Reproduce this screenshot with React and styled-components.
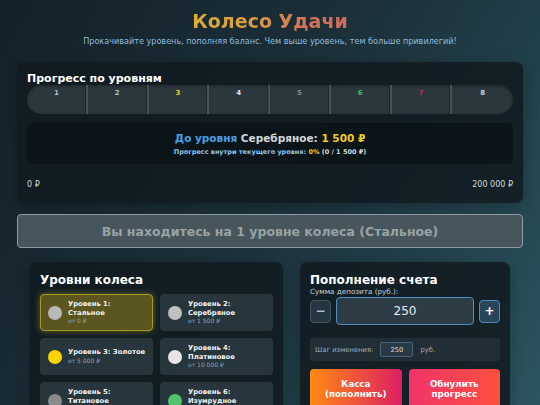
import React, { useState } from 'react';
import styled, { createGlobalStyle, css } from 'styled-components';

const GlobalStyle = createGlobalStyle`
    html, body {
        margin: 0;
        padding: 0;
        height: 100%;
    }
    body {
        font-family: "DejaVu Sans", "Noto Sans", sans-serif;
        background: linear-gradient(120deg, #13212a 0%, #1b2f38 45%, #22414b 75%, #2c5560 100%);
        color: #fff;
        overflow: hidden;
    }
`;

const Page = styled.div`
    width: 540px;
    height: 405px;
    padding-top: 10px;
    box-sizing: border-box;
    overflow: hidden;
`;

const Header = styled.div`
    display: flex;
    flex-direction: column;
    align-items: center;
    gap: 3px;
    margin-bottom: 16px;
`;

const Title = styled.h1`
    display: inline-block;
    margin: 0;
    font-size: 19px;
    line-height: 23px;
    font-weight: bold;
    background: linear-gradient(90deg, #dcaa3a 0%, #d99c42 40%, #d4765a 70%, #cf6a5e 100%);
    -webkit-background-clip: text;
    background-clip: text;
    color: transparent;
`;

const Subtitle = styled.p`
    margin: 0;
    font-size: 8.1px;
    color: #8fbcdc;
`;

const Card = styled.section`
    background: rgba(16, 26, 32, 0.85);
    border-radius: 7px;
    padding: ${p => p.$pad || '11px 10px'};
    box-shadow: 0 4px 14px rgba(0, 0, 0, 0.25);
    min-width: 0;
`;

const ProgressCard = styled(Card)`
    margin: 0 17px;
`;

const CardTitle = styled.h2`
    margin: 0;
    font-size: ${p => p.$size || '11px'};
    line-height: ${p => p.$lh || '13px'};
    font-weight: bold;
    color: #fff;
`;

const LevelBar = styled.div`
    display: grid;
    grid-template-columns: repeat(8, 1fr);
    height: 29px;
    border-radius: 15px;
    overflow: hidden;
    background: #2a373d;
    box-shadow: inset 0 1px 3px rgba(0, 0, 0, 0.35);
`;

const Segment = styled.div`
    display: flex;
    justify-content: center;
    padding-top: 4px;
    font-size: 7px;
    font-weight: bold;
    color: ${p => p.$color};
    border-right: 2px solid #485155;
    box-shadow: inset -1px 0 0 #1d262a;
    &:last-child {
        border-right: none;
        box-shadow: none;
    }
`;

const NextBox = styled.div`
    margin-top: 9px;
    background: #0b1519;
    border-radius: 5px;
    height: 41px;
    display: flex;
    flex-direction: column;
    align-items: center;
    justify-content: center;
    gap: 4px;
`;

const NextLine = styled.div`
    font-size: 10.5px;
    font-weight: bold;
    color: #d3d6d8;
`;

const SubLine = styled.div`
    font-size: 6.5px;
    font-weight: bold;
    color: #d0d8de;
`;

const Tone = styled.span`
    color: ${p => p.$c};
`;

const Scale = styled.div`
    display: flex;
    justify-content: space-between;
    font-size: 8px;
    line-height: 10px;
    color: #d5dadc;
    margin-top: 16px;
`;

const StatusButton = styled.button`
    display: block;
    width: calc(100% - 34px);
    margin: 11px 17px 0;
    height: 34px;
    border-radius: 4px;
    border: 1px solid #8d9b9f;
    background: #46565c;
    color: #98a3a6;
    font-family: inherit;
    font-size: 12.5px;
    font-weight: bold;
`;

const Bottom = styled.div`
    display: grid;
    grid-template-columns: 253px minmax(0, 1fr);
    gap: 17px;
    margin: 14px 30px 0;
`;

const LevelsGrid = styled.div`
    display: grid;
    grid-template-columns: minmax(0, 1fr) minmax(0, 1fr);
    gap: 7px;
    margin-top: 7px;
`;

const LevelCell = styled.div`
    height: 37px;
    box-sizing: border-box;
    border-radius: 4px;
    display: flex;
    align-items: center;
    gap: 6px;
    padding: 0 4px 0 7px;
    background: #27353c;
    border: 1px solid transparent;
    overflow: hidden;
    ${p => p.$active && css`
        background: #5b561f;
        border-color: #a49c22;
        box-shadow: 0 0 6px rgba(220, 200, 40, 0.45);
    `}
`;

const Dot = styled.span`
    flex: none;
    width: 14px;
    height: 14px;
    border-radius: 50%;
    background: ${p => p.$c};
`;

const LevelText = styled.div`
    display: flex;
    flex-direction: column;
    min-width: 0;
`;

const LevelName = styled.div`
    font-size: 6.8px;
    line-height: 8.5px;
    font-weight: bold;
    color: #f1f3f4;
    white-space: nowrap;
`;

const LevelPrice = styled.div`
    font-size: 6px;
    line-height: 8px;
    color: #8fa4b2;
`;

const FieldLabel = styled.div`
    font-size: 7.2px;
    line-height: 9px;
    color: #c8d2d8;
`;

const AmountRow = styled.div`
    display: flex;
    align-items: center;
    gap: 5px;
    margin-top: 1px;
`;

const StepButton = styled.button`
    flex: none;
    width: 21px;
    height: 23px;
    padding: 0;
    border-radius: 4px;
    font-family: inherit;
    font-size: 12px;
    font-weight: bold;
    color: ${p => p.$primary ? '#fff' : '#b4c0c8'};
    background: ${p => p.$primary ? '#294559' : '#263640'};
    border: 1px solid ${p => p.$primary ? '#4f8bb8' : '#445864'};
`;

const AmountInput = styled.input`
    flex: 1;
    width: 0;
    min-width: 0;
    height: 28px;
    box-sizing: border-box;
    border-radius: 4px;
    border: 1px solid #4b8ec0;
    background: #2d3c45;
    color: #e8ecee;
    text-align: center;
    font-family: inherit;
    font-size: 12px;
`;

const StepRow = styled.div`
    display: flex;
    align-items: center;
    gap: 7px;
    margin-top: 13px;
    height: 23px;
    padding: 0 5px;
    border-radius: 3px;
    background: #222e35;
    font-size: 6.8px;
    color: #9fb0ba;
`;

const SmallInput = styled.input`
    width: 33px;
    height: 15px;
    box-sizing: border-box;
    border-radius: 2px;
    border: 1px solid #45637a;
    background: #2a3a45;
    color: #d4dde2;
    text-align: center;
    font-family: inherit;
    font-size: 6.8px;
    padding: 0;
`;

const Actions = styled.div`
    display: grid;
    grid-template-columns: 1fr 1fr;
    gap: 7px;
    margin-top: 8px;
`;

const ActionButton = styled.button`
    height: 40px;
    border: none;
    border-radius: 4px;
    color: #fff;
    font-family: inherit;
    font-size: 8.8px;
    font-weight: bold;
    line-height: 10px;
    background: ${p => p.$bg};
`;

const levels = [
    { n: 1, c: '#b9bcbe' },
    { n: 2, c: '#b9bcbe' },
    { n: 3, c: '#f2cd1c' },
    { n: 4, c: '#e2e5e7' },
    { n: 5, c: '#808a8d' },
    { n: 6, c: '#44b865' },
    { n: 7, c: '#d0205a' },
    { n: 8, c: '#b8d8ee' },
];

const wheel = [
    { name: ['Уровень 1:', 'Стальное'], price: 'от 0 ₽', c: '#b8b8b8', active: true },
    { name: ['Уровень 2:', 'Серебряное'], price: 'от 1 500 ₽', c: '#c0c0c0' },
    { name: ['Уровень 3: Золотое'], price: 'от 5 000 ₽', c: '#ffd400' },
    { name: ['Уровень 4:', 'Платиновое'], price: 'от 10 000 ₽', c: '#e6e6e6' },
    { name: ['Уровень 5:', 'Титановое'], price: 'от 20 000 ₽', c: '#8a8a8a' },
    { name: ['Уровень 6:', 'Изумрудное'], price: 'от 50 000 ₽', c: '#4ec46c' },
];

export default function App() {
    const [amount, setAmount] = useState(250);
    const [step, setStep] = useState(250);

    return (
        <Page>
            <GlobalStyle />
            <Header>
                <Title>Колесо Удачи</Title>
                <Subtitle>Прокачивайте уровень, пополняя баланс. Чем выше уровень, тем больше привилегий!</Subtitle>
            </Header>

            <ProgressCard $pad="10px 10px 13px">
                <CardTitle>Прогресс по уровням</CardTitle>
                <LevelBar>
                    {levels.map(l => (
                        <Segment key={l.n} $color={l.c}>{l.n}</Segment>
                    ))}
                </LevelBar>
                <NextBox>
                    <NextLine>
                        <Tone $c="#4a9fe3">До уровня</Tone> Серебряное: <Tone $c="#f2cb1e">1 500 ₽</Tone>
                    </NextLine>
                    <SubLine>
                        <Tone $c="#8fc3ea">Прогресс внутри текущего уровня:</Tone> <Tone $c="#f2cb1e">0%</Tone> (0 / 1 500 ₽)
                    </SubLine>
                </NextBox>
                <Scale>
                    <span>0 ₽</span>
                    <span>200 000 ₽</span>
                </Scale>
            </ProgressCard>

            <StatusButton>Вы находитесь на 1 уровне колеса (Стальное)</StatusButton>

            <Bottom>
                <Card $pad="11px 10px">
                    <CardTitle $size="12px" $lh="14px">Уровни колеса</CardTitle>
                    <LevelsGrid>
                        {wheel.map(w => (
                            <LevelCell key={w.name.join(' ')} $active={w.active}>
                                <Dot $c={w.c} />
                                <LevelText>
                                    {w.name.map(line => (
                                        <LevelName key={line}>{line}</LevelName>
                                    ))}
                                    <LevelPrice>{w.price}</LevelPrice>
                                </LevelText>
                            </LevelCell>
                        ))}
                    </LevelsGrid>
                </Card>

                <Card $pad="11px 10px">
                    <CardTitle $size="12px" $lh="14px">Пополнение счета</CardTitle>
                    <FieldLabel>Сумма депозита (руб.):</FieldLabel>
                    <AmountRow>
                        <StepButton onClick={() => setAmount(a => Math.max(0, a - step))}>−</StepButton>
                        <AmountInput value={amount} onChange={e => setAmount(e.target.value)} />
                        <StepButton $primary onClick={() => setAmount(a => Number(a) + step)}>+</StepButton>
                    </AmountRow>
                    <StepRow>
                        <span>Шаг изменения:</span>
                        <SmallInput value={step} onChange={e => setStep(Number(e.target.value))} />
                        <span>руб.</span>
                    </StepRow>
                    <Actions>
                        <ActionButton $bg="linear-gradient(90deg, #ff8a12, #dc1f62)">Касса<br />(пополнить)</ActionButton>
                        <ActionButton $bg="linear-gradient(90deg, #f2346a, #ff503e)">Обнулить<br />прогресс</ActionButton>
                    </Actions>
                </Card>
            </Bottom>
        </Page>
    );
}
